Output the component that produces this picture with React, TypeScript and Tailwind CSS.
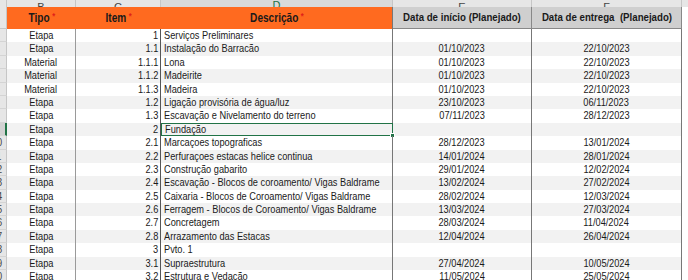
import type { ReactNode } from 'react'

const rows: [string, string, string, string, string][] = [
  ['Etapa', '1', 'Serviços Preliminares', '', ''],
  ['Etapa', '1.1', 'Instalação do Barracão', '01/10/2023', '22/10/2023'],
  ['Material', '1.1.1', 'Lona', '01/10/2023', '22/10/2023'],
  ['Material', '1.1.2', 'Madeirite', '01/10/2023', '22/10/2023'],
  ['Material', '1.1.3', 'Madeira', '01/10/2023', '22/10/2023'],
  ['Etapa', '1.2', 'Ligação provisória de água/luz', '23/10/2023', '06/11/2023'],
  ['Etapa', '1.3', 'Escavação e Nivelamento do terreno', '07/11/2023', '28/12/2023'],
  ['Etapa', '2', 'Fundação', '', ''],
  ['Etapa', '2.1', 'Marcaçoes topograficas', '28/12/2023', '13/01/2024'],
  ['Etapa', '2.2', 'Perfuraçoes estacas helice continua', '14/01/2024', '28/01/2024'],
  ['Etapa', '2.3', 'Construção gabarito', '29/01/2024', '12/02/2024'],
  ['Etapa', '2.4', 'Escavação - Blocos de coroamento/ Vigas Baldrame', '13/02/2024', '27/02/2024'],
  ['Etapa', '2.5', 'Caixaria - Blocos de Coroamento/ Vigas Baldrame', '28/02/2024', '12/03/2024'],
  ['Etapa', '2.6', 'Ferragem - Blocos de Coroamento/ Vigas Baldrame', '13/03/2024', '27/03/2024'],
  ['Etapa', '2.7', 'Concretagem', '28/03/2024', '11/04/2024'],
  ['Etapa', '2.8', 'Arrazamento das Estacas', '12/04/2024', '26/04/2024'],
  ['Etapa', '3', 'Pvto. 1', '', ''],
  ['Etapa', '3.1', 'Supraestrutura', '27/04/2024', '10/05/2024'],
  ['Etapa', '3.2', 'Estrutura e Vedação', '11/05/2024', '25/05/2024'],
]

const cols = 'grid grid-cols-[7px_69px_85px_232px_139px_150px_6px]'

// sheet font renders narrower than Arial, so squeeze text horizontally
function T({ children, o = 'origin-center', s = 'scale-x-[0.84]' }: { children: ReactNode; o?: string; s?: string }) {
  return <span className={`inline-block ${s} ${o}`}>{children}</span>
}

function Star() {
  return <span className="relative -top-[3px] ml-[3px] text-[9px] text-[#e0201a]">*</span>
}

export default function App() {
  return (
    <div className="h-[280px] w-[688px] overflow-hidden whitespace-nowrap bg-white font-['Liberation_Sans',Arial,sans-serif] text-[11px] text-[#1a1a1a]">
      {/* column letters */}
      <div className={`${cols} h-[7px] overflow-hidden bg-[#e6e6e6] text-[11px] leading-none text-[#444]`}>
        <div className="border-r border-b border-[#c6c6c6]" />
        <div className="flex items-end justify-center border-r border-b border-[#c6c6c6]"><span className="-mb-[2px]">B</span></div>
        <div className="flex items-end justify-center border-r border-b border-[#c6c6c6]"><span className="-mb-[2px]">C</span></div>
        <div className="flex items-end justify-center border-r border-b-2 border-[#c6c6c6] border-b-[#217346] bg-[#d9d9d9] text-[#217346]"><span className="-mb-[1px]">D</span></div>
        <div className="flex items-end justify-center border-r border-b border-[#c6c6c6]"><span className="-mb-[2px]">E</span></div>
        <div className="flex items-end justify-center border-r border-b border-[#c6c6c6]"><span className="-mb-[2px]">F</span></div>
        <div className="border-b border-[#c6c6c6]" />
      </div>

      {/* header row */}
      <div className={`${cols} h-[22px] text-[12px] font-bold text-[#1a1a1a]`}>
        <div className="border-r border-b border-[#c6c6c6] bg-[#e6e6e6]" />
        <div className="flex items-center justify-center bg-[#ff6a1f]"><T>Tipo<Star /></T></div>
        <div className="flex items-center justify-center bg-[#ff6a1f]"><T>Item<Star /></T></div>
        <div className="flex items-center justify-center border-r border-[#777] bg-[#ff6a1f]"><T>Descrição<Star /></T></div>
        <div className="flex items-center justify-center border-r border-b border-[#888] bg-[#cfcfcf] text-[11px]">
          <T s="scale-x-[0.88]">Data de início (Planejado)</T>
        </div>
        <div className="flex items-center justify-center whitespace-pre border-r border-b border-[#888] bg-[#cfcfcf] text-[11px]">
          <T s="scale-x-[0.88]">Data de entrega  (Planejado)</T>
        </div>
        <div className="bg-white" />
      </div>

      {/* data rows */}
      {rows.map((r, i) => {
        const n = i + 2
        const band = i % 2 === 1 ? 'bg-[#f2f2f2]' : 'bg-white'
        const active = n === 9
        return (
          <div key={n} className={`${cols} h-[13.4px] leading-[13.4px] ${band}`}>
            <div
              className={`flex justify-end overflow-hidden border-b border-[#d4d4d4] text-[#444] ${
                active ? 'border-r-2 border-r-[#217346] bg-[#d2d2d2]' : 'border-r border-r-[#c6c6c6] bg-[#e6e6e6]'
              }`}
            >
              <span className="w-[18px] shrink-0 text-center"><T>{n}</T></span>
            </div>
            <div className="border-r border-[#9a9a9a] text-center"><T>{r[0]}</T></div>
            <div className="border-r border-[#555] pr-[2px] text-right"><T o="origin-right">{r[1]}</T></div>
            <div
              className={`relative pl-[3px] ${
                active ? 'border border-[#217346] leading-[11.4px]' : 'overflow-hidden border-r border-[#777]'
              }`}
            >
              <T o="origin-left">{r[2]}</T>
              {active && <span className="absolute -right-[3px] -bottom-[3px] h-[5px] w-[5px] border border-white bg-[#217346]" />}
            </div>
            <div className="border-r border-[#777] text-center"><T>{r[3]}</T></div>
            <div className="border-r border-[#777] text-center"><T>{r[4]}</T></div>
            <div className="bg-white" />
          </div>
        )
      })}
    </div>
  )
}
